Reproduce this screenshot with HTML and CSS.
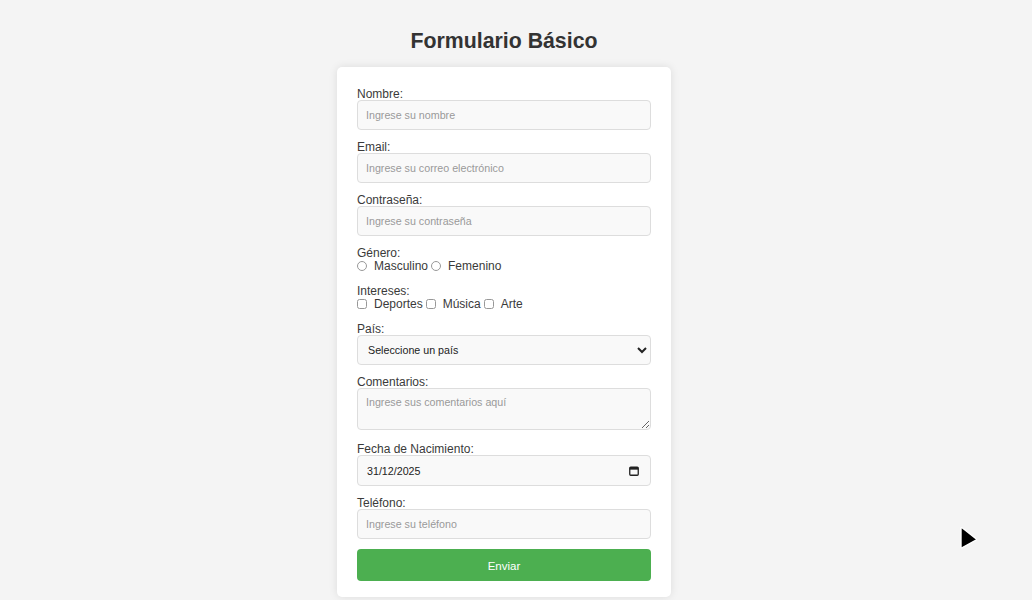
FILE: index.html
```html
<!DOCTYPE html>
<html lang="es">
<head>
<meta charset="utf-8">
<title>Formulario Básico</title>
<link rel="stylesheet" href="styles.css">
</head>
<body>
<h1 class="title">Formulario Básico</h1>
<form class="card">
  <label class="lbl" for="nombre">Nombre:</label>
  <input class="field" id="nombre" type="text" placeholder="Ingrese su nombre">

  <label class="lbl" for="email">Email:</label>
  <input class="field" id="email" type="email" placeholder="Ingrese su correo electrónico">

  <label class="lbl" for="pass">Contraseña:</label>
  <input class="field" id="pass" type="password" placeholder="Ingrese su contraseña">

  <label class="lbl">Género:</label>
  <div class="opts">
    <input class="radio" type="radio" name="g" id="m"><label class="opt" for="m">Masculino</label>
    <input class="radio" type="radio" name="g" id="f"><label class="opt" for="f">Femenino</label>
  </div>

  <label class="lbl">Intereses:</label>
  <div class="opts">
    <input class="check" type="checkbox" id="d"><label class="opt" for="d">Deportes</label>
    <input class="check" type="checkbox" id="mu"><label class="opt" for="mu">Música</label>
    <input class="check" type="checkbox" id="a"><label class="opt" for="a">Arte</label>
  </div>

  <label class="lbl" for="pais">País:</label>
  <select class="field select" id="pais">
    <option>Seleccione un país</option>
  </select>

  <label class="lbl" for="com">Comentarios:</label>
  <textarea class="field area" id="com" placeholder="Ingrese sus comentarios aquí"></textarea>

  <label class="lbl" for="fecha">Fecha de Nacimiento:</label>
  <div class="field date">
    <input class="date-in" id="fecha" type="text" value="31/12/2025" readonly>
    <svg class="cal" width="10" height="10" viewBox="0 0 10 10"><rect x="0.75" y="1.25" width="8.5" height="8" rx="1" fill="none" stroke="#222" stroke-width="1.3"/><rect x="0.75" y="1.25" width="8.5" height="2.4" fill="#222"/></svg>
  </div>

  <label class="lbl" for="tel">Teléfono:</label>
  <input class="field" id="tel" type="tel" placeholder="Ingrese su teléfono">

  <button class="btn" type="button">Enviar</button>
</form>
<svg class="cursor" width="20" height="24" viewBox="0 0 20 24"><path d="M2 1.5 L2 20 Q2 21.5 3.4 20.6 L17 13.2 Q18.3 12.4 17 11.6 L3.4 1 Q2 0.2 2 1.5 Z" fill="#000" stroke="#fff" stroke-width="1.4" stroke-linejoin="round"/></svg>
</body>
</html>
```
FILE: styles.css
```css
html, body {
  margin: 0;
  padding: 0;
}
html {
  background: #f4f4f4;
}
body {
  width: 1008px;
  background: #f4f4f4;
  font-family: "Liberation Sans", Arial, sans-serif;
  color: #333;
  padding-top: 29px;
  height: 600px;
  box-sizing: border-box;
  overflow: hidden;
}
.title {
  margin: 0 0 14px;
  text-align: center;
  font-size: 21.3px;
  line-height: 24px;
  font-weight: bold;
  color: #333;
}
.card {
  width: 294px;
  margin: 0 auto;
  background: #fff;
  padding: 19px 20px 16px;
  border-radius: 5px;
  box-shadow: 0 0 8px rgba(0, 0, 0, 0.1);
  display: flex;
  flex-direction: column;
}
.lbl {
  display: block;
  font-size: 12px;
  line-height: 12px;
  padding-top: 2px;
  color: #3a3a3a;
}
.field {
  display: block;
  box-sizing: border-box;
  width: 100%;
  height: 30px;
  margin: 0 0 9px;
  padding: 0 8px;
  border: 1px solid #ddd;
  border-radius: 4px;
  background: #f9f9f9;
  font-family: "Liberation Sans", Arial, sans-serif;
  font-size: 10.7px;
  color: #333;
  outline: none;
}
.field::placeholder {
  color: #999;
}
.select {
  padding: 0 6px;
  color: #222;
}
.area {
  height: 42px;
  padding: 7px 8px;
  margin-bottom: 11px;
  resize: vertical;
}
.date {
  height: 31px;
  display: flex;
  align-items: center;
  justify-content: space-between;
  padding: 0 11px 0 9px;
}
.date-in {
  border: none;
  background: transparent;
  padding: 0;
  margin: 0;
  font-family: "Liberation Sans", Arial, sans-serif;
  font-size: 10.7px;
  color: #222;
  outline: none;
  width: 120px;
}
.opts {
  display: flex;
  align-items: center;
  height: 14px;
  margin-bottom: 10px;
  font-size: 12px;
}
.radio, .check {
  width: 10px;
  height: 10px;
  margin: 0 2px 0 0;
  flex: none;
  opacity: 0.75;
}
.opt {
  margin-left: 5px;
  margin-right: 3px;
  color: #3a3a3a;
}
.btn {
  margin-top: 1px;
  height: 32px;
  padding-top: 2px;
  border: none;
  border-radius: 4px;
  background: #4caf50;
  color: #fff;
  font-family: "Liberation Sans", Arial, sans-serif;
  font-size: 11.5px;
  cursor: pointer;
}
.cursor {
  position: absolute;
  left: 959px;
  top: 527px;
}
```
